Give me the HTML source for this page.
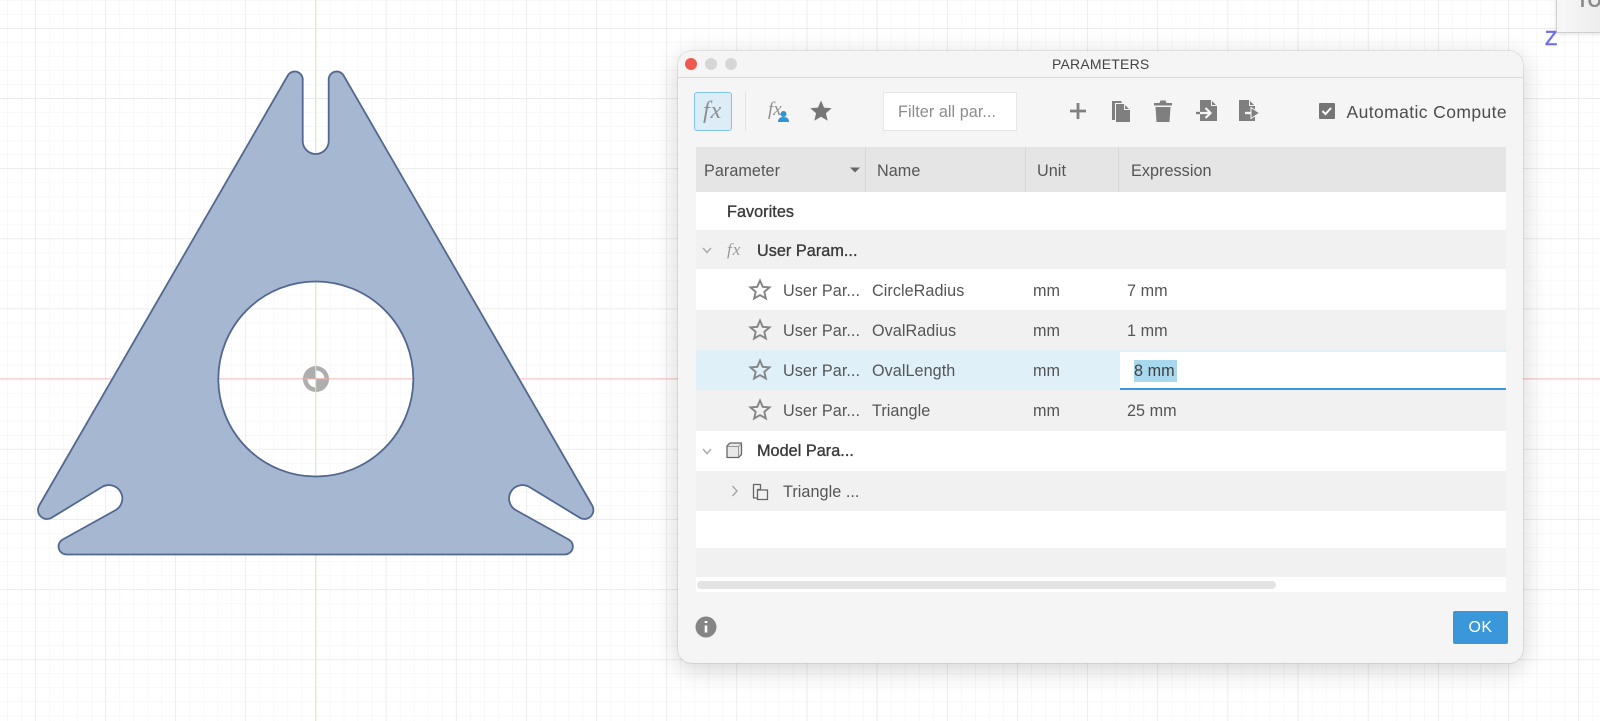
<!DOCTYPE html>
<html><head><meta charset="utf-8"><style>
html,body{margin:0;padding:0;width:1600px;height:721px;overflow:hidden;background:#fff;font-family:"Liberation Sans",sans-serif}
body{filter:blur(.35px)}
.a{position:absolute}
svg{position:absolute;overflow:visible}
.t{position:absolute;white-space:nowrap;font-size:16.2px;color:#555;letter-spacing:.05px;line-height:20px;height:20px}
.b{color:#3a3a3a;font-size:16.2px;letter-spacing:.05px;-webkit-text-stroke:.35px #3a3a3a}
.r{position:absolute;left:695.5px;width:810.5px}
.g{background:#f1f1f1}.w{background:#fff}
#d{position:absolute;left:678px;top:51px;width:845px;height:612px;background:#f5f5f5;border-radius:14px;box-shadow:0 6px 26px rgba(0,0,0,.18),0 0 0 1px rgba(0,0,0,.07)}
</style></head><body>
<svg width="1600" height="721" style="left:0;top:0">
<defs>
<pattern id="m" x="7" y="0" width="14.03" height="14.03" patternUnits="userSpaceOnUse"><path d="M0 0V14.03" stroke="#f4f4f4" stroke-width="1.2" fill="none"/><path d="M0 0H14.03" stroke="#f4f4f4" stroke-width="1.2" fill="none"/></pattern>
<pattern id="M" x="35" y="28" width="70.15" height="70.15" patternUnits="userSpaceOnUse"><path d="M0 0V70.15M0 0H70.15" stroke="#e4e4e4" stroke-width="1.2" fill="none"/></pattern>
</defs>
<rect width="1600" height="721" fill="#fff"/>
<rect width="1600" height="721" fill="url(#m)"/>
<rect width="1600" height="721" fill="url(#M)"/>
<path d="M315.7 0V721" stroke="#cdf3cd" stroke-width="1.3"/>
<path d="M0 378.8H1600" stroke="#f5c6c6" stroke-width="1.2"/>
<path fill="#a5b7d1" stroke="#52688f" stroke-width="1.8" fill-rule="evenodd" d="M288.1 75A8 8 0 0 1 302.7 79L302.7 141A13 13 0 0 0 328.7 141L328.7 79A8 8 0 0 1 343.3 75L592.2 505.5A9 9 0 0 1 579.9 517.8L529.400 487A13.4 13.4 0 0 0 515.6 510L568.9 539.6A8 8 0 0 1 564.9 554.5L66.5 554.5A8 8 0 0 1 62.5 539.6L115.800 510A13.4 13.4 0 0 0 102 487L51.500 517.8A9 9 0 0 1 39.200 505.5ZM413.3 379A97.5 97.5 0 1 0 218.3 379A97.5 97.5 0 1 0 413.3 379Z"/>
<circle cx="316" cy="379" r="13" fill="#aeaeae"/>
<path d="M316 379V370.500A8.500 8.500 0 0 1 324.500 379ZM316 379V387.500A8.500 8.500 0 0 1 307.500 379Z" fill="#fff"/>
<path d="M315.7 366V392" stroke="#c0ecc0" stroke-width="1.2"/>
<path d="M302 378.8H330" stroke="#eeaaaa" stroke-width="1.2"/>
</svg>

<div class="a" style="left:1556px;top:-2px;width:50px;height:33px;background:linear-gradient(90deg,#f7f7f7,#ececec);border:1px solid #cfcfcf;box-shadow:0 1px 4px rgba(0,0,0,.12);overflow:hidden"><div class="a" style="left:20px;top:-8px;font-size:18px;color:#8a8a8a;font-weight:bold">TOP</div></div>
<div class="a" style="left:1545px;top:28px;font-size:20px;line-height:22px;color:#6b6bf5;-webkit-text-stroke:.5px #6b6bf5">Z</div>

<div id="d"></div>
<div class="a" style="left:678px;top:77px;width:845px;height:1px;background:#dadada"></div>
<svg width="1600" height="721" style="left:0;top:0">
<circle cx="691" cy="64" r="6" fill="#f0594f"/><circle cx="711" cy="64" r="6" fill="#d6d6d6"/><circle cx="731" cy="64" r="6" fill="#d6d6d6"/>
</svg>
<div class="t" style="left:1052px;top:54px;font-size:14px;letter-spacing:.2px;color:#444">PARAMETERS</div>

<div class="a" style="left:694px;top:92px;width:36px;height:37px;background:#dcedf8;border:1px solid #80c4ec;border-radius:3px"></div>
<div class="a" style="left:745px;top:92px;width:1px;height:39px;background:#e2e2e2"></div>
<div class="a" style="left:703px;top:98px;font:italic 24px/27px 'Liberation Serif',serif;letter-spacing:1px;color:#8f8f8f">fx</div>
<div class="a" style="left:768px;top:99px;font:italic 19px/22px 'Liberation Serif',serif;color:#8f8f8f">fx</div>
<svg width="1600" height="721" style="left:0;top:0">
<circle cx="783.500" cy="114" r="3" fill="#2f95d8"/><path d="M778 122c0-3.500 2-5 5.500-5s5.500 1.500 5.500 5Z" fill="#2f95d8"/>
<path d="M821 100.500l3.100 7.100 7.600.7-5.800 5 1.800 7.500-6.700-4-6.700 4 1.800-7.500-5.800-5 7.600-.7Z" fill="#777"/>
<path d="M1070 111H1086M1078 103V119" stroke="#808080" stroke-width="2.8" fill="none"/>
<path d="M1112 101h9l1 2h-7v17h-3ZM1116 104h8l6 6v12h-14Z" fill="#7f7f7f"/>
<path d="M1124.500 104.500v5h5" fill="none" stroke="#f5f5f5" stroke-width="1"/>
<path d="M1154 103h5.500l1-2.500h5l1 2.500h5.500v2.500h-18ZM1155.500 107h15l-1 15h-13Z" fill="#7f7f7f"/>
<path d="M1200 100h11l6 6v15h-17Z" fill="#7f7f7f"/>
<path d="M1211.500 100.500v5h5" fill="none" stroke="#f5f5f5" stroke-width="1"/>
<path d="M1196 113h4" stroke="#7f7f7f" stroke-width="2.400"/>
<path d="M1200 113h10M1205.500 108l5 5-5 5" fill="none" stroke="#f5f5f5" stroke-width="2.200"/>
<path d="M1239 100h10l6 6v15h-16Z" fill="#7f7f7f"/>
<path d="M1249.500 100.500v5h5" fill="none" stroke="#f5f5f5" stroke-width="1"/>
<path d="M1245 113h6" stroke="#f5f5f5" stroke-width="2.400"/>
<path d="M1251 107.500l8.500 5.500-8.500 5.500Z" fill="#7f7f7f" stroke="#f5f5f5" stroke-width="1"/>
<rect x="1319" y="103" width="16" height="16" rx="1" fill="#757575"/><path d="M1322.500 111l3 3 5.500-6" stroke="#fff" stroke-width="2" fill="none"/>
</svg>
<div class="a" style="left:883px;top:92px;width:132px;height:37px;background:#fff;border:1px solid #e6e6e6"></div>
<div class="t" style="left:898px;top:102px;color:#8c8c8c;font-size:16.2px">Filter all par...</div>
<div class="t" style="left:1346.500px;top:102px;font-size:17.500px;letter-spacing:.4px;color:#4d4d4d">Automatic Compute</div>

<div class="r" style="top:147px;height:45px;background:#e5e5e5"></div>
<div class="a" style="left:865px;top:147px;width:1px;height:45px;background:#d6d6d6"></div>
<div class="a" style="left:1025px;top:147px;width:1px;height:45px;background:#d6d6d6"></div>
<div class="a" style="left:1118px;top:147px;width:1px;height:45px;background:#d6d6d6"></div>
<div class="t" style="left:704px;top:161px">Parameter</div>
<div class="t" style="left:877px;top:161px">Name</div>
<div class="t" style="left:1037px;top:161px">Unit</div>
<div class="t" style="left:1131px;top:161px">Expression</div>

<div class="r w" style="top:192px;height:38px"></div>
<div class="r g" style="top:230px;height:39px"></div>
<div class="r w" style="top:269px;height:41px"></div>
<div class="r g" style="top:310px;height:40px"></div>
<div class="r" style="top:350px;height:40px;background:#dff0f9"></div>
<div class="r g" style="top:390px;height:41px"></div>
<div class="r w" style="top:431px;height:40px"></div>
<div class="r g" style="top:471px;height:40px"></div>
<div class="r w" style="top:511px;height:37px"></div>
<div class="r g" style="top:548px;height:29px"></div>
<div class="r w" style="top:577px;height:15px"></div>
<div class="a" style="left:697px;top:581px;width:579px;height:8px;background:#e3e3e3;border-radius:4px"></div>

<div class="a" style="left:1120px;top:352px;width:386px;height:36px;background:#fff"></div>
<div class="a" style="left:1120px;top:388px;width:386px;height:2px;background:#3a97da"></div>
<div class="a" style="left:1134px;top:360px;width:43px;height:22px;background:#a8d8ee"></div>

<div class="t b" style="left:727px;top:202px">Favorites</div>
<div class="t b" style="left:757px;top:241px">User Param...</div>
<div class="t b" style="left:757px;top:441px">Model Para...</div>

<div class="t" style="left:783px;top:281px">User Par...</div><div class="t" style="left:872px;top:281px">CircleRadius</div><div class="t" style="left:1033px;top:281px">mm</div><div class="t" style="left:1127px;top:281px">7 mm</div>
<div class="t" style="left:783px;top:321px">User Par...</div><div class="t" style="left:872px;top:321px">OvalRadius</div><div class="t" style="left:1033px;top:321px">mm</div><div class="t" style="left:1127px;top:321px">1 mm</div>
<div class="t" style="left:783px;top:361px">User Par...</div><div class="t" style="left:872px;top:361px">OvalLength</div><div class="t" style="left:1033px;top:361px">mm</div><div class="t" style="left:1134px;top:361px;color:#3f3f3f">8 mm</div>
<div class="t" style="left:783px;top:401px">User Par...</div><div class="t" style="left:872px;top:401px">Triangle</div><div class="t" style="left:1033px;top:401px">mm</div><div class="t" style="left:1127px;top:401px">25 mm</div>
<div class="t" style="left:783px;top:482px">Triangle ...</div>

<div class="a" style="left:727px;top:240px;font:italic 17px/20px 'Liberation Serif',serif;letter-spacing:1px;color:#999">fx</div>
<svg width="1600" height="721" style="left:0;top:0">
<defs><path id="s" d="M0-9.500l2.700 6.300 6.800.6-5.200 4.500 1.600 6.700L0 5.100l-5.900 3.500 1.600-6.700-5.200-4.500 6.800-.6Z" fill="none" stroke="#858585" stroke-width="1.900"/></defs>
<use href="#s" x="760" y="290"/><use href="#s" x="760" y="330"/><use href="#s" x="760" y="370"/><use href="#s" x="760" y="410"/>
<path d="M850 167.500h10l-5 5Z" fill="#666"/>
<path d="M703 248l4 4.500 4-4.500M703 449l4 4.500 4-4.500" stroke="#aaa" stroke-width="1.500" fill="none"/>
<path d="M732.500 486l4.500 5-4.500 5" stroke="#aaa" stroke-width="1.500" fill="none"/>
<path d="M727 446l3-3h11.500v11.500l-3 3H727Z" fill="#e8e8e8" stroke="#666" stroke-width="1.300" stroke-linejoin="round"/><path d="M727.500 446.500h11v10M738.500 446.500l3-3" fill="none" stroke="#999" stroke-width="1"/>
<path d="M753.500 484.500h7v5h-3v8.500h-4ZM757.500 490h10v9.500h-10Z" fill="none" stroke="#666" stroke-width="1.300" stroke-linejoin="round"/>
<circle cx="706" cy="627" r="10.500" fill="#858585"/><path d="M706 621v2M706 625.500v7" stroke="#fff" stroke-width="2.600"/>
</svg>

<div class="a" style="left:1453px;top:611px;width:55px;height:33px;background:#3a97da;border-radius:2px;color:#fff;font-size:16px;line-height:33px;text-align:center;letter-spacing:.4px">OK</div>
</body></html>
